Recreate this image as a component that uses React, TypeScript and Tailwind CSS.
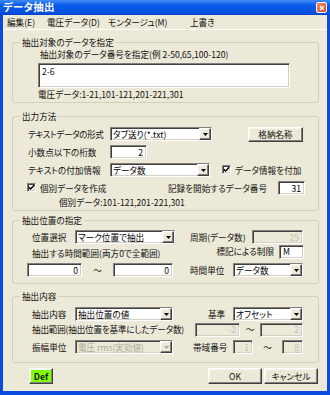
import React from "react";

const font = "font-['Noto_Sans_CJK_JP','Noto_Sans',sans-serif] [font-feature-settings:'palt']";
const sunken =
  "border border-t-[#808080] border-l-[#808080] border-b-white border-r-white shadow-[inset_1px_1px_0_#404040,inset_-1px_-1px_0_#d4d0c8]";
const raised =
  "border border-t-white border-l-white border-b-[#404040] border-r-[#404040] shadow-[inset_-1px_-1px_0_#808080,inset_1px_1px_0_#f6f5ee]";

function Arrow({ disabled }: { disabled?: boolean }) {
  return (
    <div className={`h-full w-[12px] shrink-0 bg-[#ece9d8] flex items-center justify-center ${raised}`}>
      <svg width="5" height="3" viewBox="0 0 5 3">
        <path d="M0 0h5L2.5 3z" fill={disabled ? "#aca899" : "#000"} />
      </svg>
    </div>
  );
}

function Combo({ cls, text, disabled }: { cls: string; text: string; disabled?: boolean }) {
  return (
    <div
      className={`${cls} h-[14px] shrink-0 flex items-stretch ${sunken} ${
        disabled ? "bg-[#ece9d8] text-[#aca899]" : "bg-white text-black"
      }`}
    >
      <div className="flex-1 pl-[2px] flex items-center whitespace-nowrap overflow-hidden leading-none">{text}</div>
      <Arrow disabled={disabled} />
    </div>
  );
}

function Input({ cls, text, disabled, left }: { cls: string; text: string; disabled?: boolean; left?: boolean }) {
  return (
    <div
      className={`${cls} h-[14px] shrink-0 flex items-center px-[3px] leading-none whitespace-nowrap ${sunken} ${
        left ? "justify-start" : "justify-end"
      } ${disabled ? "bg-[#ece9d8] text-[#c4c1b1]" : "bg-white text-black"}`}
    >
      {text}
    </div>
  );
}

function Check() {
  return (
    <div className={`w-[9px] h-[9px] shrink-0 bg-white flex items-center justify-center ${sunken}`}>
      <svg width="7" height="7" viewBox="0 0 7 7">
        <path d="M0.8 3.2 L2.6 5 L6.2 1.2" stroke="#000" strokeWidth="1.4" fill="none" />
      </svg>
    </div>
  );
}

function Group({ title, cls, children }: { title: string; cls: string; children: React.ReactNode }) {
  return (
    <div className={`relative ml-[9px] w-[307px] border border-[#d0d0bf] rounded-[3px] flex flex-col ${cls}`}>
      <span className="absolute left-[7px] top-[-7px] px-[2px] bg-[#ece9d8] leading-[12px] whitespace-nowrap">
        {title}
      </span>
      {children}
    </div>
  );
}

function Button({ cls, children }: { cls: string; children: React.ReactNode }) {
  return (
    <div className={`${cls} shrink-0 flex items-center justify-center leading-none ${raised}`}>{children}</div>
  );
}

export default function App() {
  return (
    <div className={`w-[330px] h-[395px] bg-[#0a4ae0] flex flex-col text-[8.6px] text-[#111] ${font}`}>
      {/* title bar */}
      <div className="h-[15px] shrink-0 flex items-center justify-between pl-[3px] pr-[3px] bg-[linear-gradient(#3f8cf6,#0a5be9_35%,#0352e2_80%,#0144cf)]">
        <span className="text-white font-bold text-[10.5px] leading-none tracking-[0.2px]">データ抽出</span>
        <div className="w-[11px] h-[11px] rounded-[2px] border border-white bg-[linear-gradient(135deg,#f08a6a,#d8461c)] flex items-center justify-center">
          <svg width="6" height="6" viewBox="0 0 6 6">
            <path d="M1 1L5 5M5 1L1 5" stroke="#fff" strokeWidth="1.4" />
          </svg>
        </div>
      </div>
      {/* client */}
      <div className="flex-1 mx-[3px] mb-[4px] bg-[#ece9d8] flex flex-col">
        {/* menu */}
        <div className="h-[15px] shrink-0 flex items-start pt-[1px] leading-[12px] border-b border-white whitespace-nowrap">
          <span className="ml-[4px] w-[40px]">編集(E)</span>
          <span className="w-[61px]">電圧データ(D)</span>
          <span className="w-[82px]">モンタージュ(M)</span>
          <span>上書き</span>
        </div>

        {/* G1 */}
        <Group title="抽出対象のデータを指定" cls="mt-[12px] h-[61px]">
          <div className="mt-[5px] ml-[27px] leading-[12px] whitespace-nowrap">
            抽出対象のデータ番号を指定(例 2-50,65,100-120)
          </div>
          <div className={`mt-[3px] ml-[25px] w-[252px] h-[25px] bg-white px-[3px] pt-[2px] leading-[10px] ${sunken}`}>
            2-6
          </div>
          <div className="ml-[25px] leading-[12px] whitespace-nowrap">電圧データ:1-21,101-121,201-221,301</div>
        </Group>

        {/* G2 */}
        <Group title="出力方法" cls="mt-[13px] h-[95px]">
          <div className="mt-[9px] h-[16px] flex items-center">
            <span className="ml-[15px] w-[82px] whitespace-nowrap tracking-[-0.4px]">テキストデータの形式</span>
            <Combo cls="w-[102px]" text="タブ送り(*.txt)" />
            <Button cls="ml-[36px] w-[55px] h-[15px] bg-[#ece9d8]">格納名称</Button>
          </div>
          <div className="mt-[2px] h-[16px] flex items-center">
            <span className="ml-[15px] w-[82px] whitespace-nowrap">小数点以下の桁数</span>
            <Input cls="w-[37px]" text="2" />
          </div>
          <div className="mt-[2px] h-[16px] flex items-center">
            <span className="ml-[15px] w-[82px] whitespace-nowrap">テキストの付加情報</span>
            <Combo cls="w-[100px]" text="データ数" />
            <div className="ml-[12px] flex items-center gap-[4px] whitespace-nowrap">
              <Check />
              <span>データ情報を付加</span>
            </div>
          </div>
          <div className="mt-[2px] h-[16px] flex items-center">
            <div className="ml-[14px] w-[141px] flex items-center gap-[4px] whitespace-nowrap">
              <Check />
              <span>個別データを作成</span>
            </div>
            <span className="w-[110px] whitespace-nowrap">記録を開始するデータ番号</span>
            <Input cls="w-[27px]" text="31" />
          </div>
          <div className="ml-[46px] leading-[12px] whitespace-nowrap">個別データ:101-121,201-221,301</div>
        </Group>

        {/* G3 */}
        <Group title="抽出位置の指定" cls="mt-[9px] h-[64px]">
          <div className="mt-[9px] h-[14px] flex items-center">
            <span className="ml-[19px] w-[43px] whitespace-nowrap">位置選択</span>
            <Combo cls="w-[100px]" text="マーク位置で抽出" />
            <span className="ml-[15px] w-[62px] whitespace-nowrap">周期(データ数)</span>
            <Input cls="w-[51px]" text="25" disabled />
          </div>
          <div className="h-[15px] flex items-end">
            <span className="ml-[19px] leading-[12px] whitespace-nowrap">抽出する時間範囲(両方0で全範囲)</span>
            <div className="ml-auto mr-[14px] flex items-center gap-[5px] self-stretch">
              <span className="whitespace-nowrap">標記による制限</span>
              <Input cls="w-[25px]" text="M" left />
            </div>
          </div>
          <div className="mt-[4px] h-[14px] flex items-center">
            <Input cls="ml-[14px] w-[55px]" text="0" />
            <span className="w-[31px] text-center">〜</span>
            <Input cls="w-[60px]" text="0" />
            <span className="ml-[17px] w-[43px] whitespace-nowrap">時間単位</span>
            <Combo cls="w-[70px]" text="データ数" />
          </div>
        </Group>

        {/* G4 */}
        <Group title="抽出内容" cls="mt-[12px] h-[67px]">
          <div className="mt-[10px] h-[14px] flex items-center">
            <span className="ml-[19px] w-[43px] whitespace-nowrap">抽出内容</span>
            <Combo cls="w-[98px]" text="抽出位置の値" />
            <span className="ml-[35px] w-[25px] whitespace-nowrap">基準</span>
            <Combo cls="w-[70px]" text="オフセット" />
          </div>
          <div className="mt-[2px] h-[13px] flex items-center">
            <span className="ml-[19px] w-[163px] whitespace-nowrap tracking-[-0.2px]">抽出範囲(抽出位置を基準にしたデータ数)</span>
            <Input cls="w-[45px] h-[13px]" text="-2" disabled />
            <span className="w-[20px] text-center">〜</span>
            <Input cls="w-[43px] h-[13px]" text="2" disabled />
          </div>
          <div className="mt-[4px] h-[14px] flex items-center">
            <span className="ml-[19px] w-[43px] whitespace-nowrap">振幅単位</span>
            <Combo cls="w-[98px]" text="電圧 rms(実効値)" disabled />
            <span className="ml-[20px] w-[40px] whitespace-nowrap">帯域番号</span>
            <Input cls="w-[20px]" text="1" disabled />
            <span className="w-[29px] text-center">〜</span>
            <Input cls="w-[21px]" text="8" disabled />
          </div>
        </Group>

        {/* buttons */}
        <div className="mt-[5px] h-[16px] flex items-stretch">
          <Button cls="ml-[26px] w-[24px] bg-[#80ff00] font-bold">Def</Button>
          <Button cls="ml-[155px] w-[54px] bg-[#ece9d8]">OK</Button>
          <Button cls="ml-[2px] w-[54px] bg-[#ece9d8]">キャンセル</Button>
        </div>
      </div>
    </div>
  );
}
